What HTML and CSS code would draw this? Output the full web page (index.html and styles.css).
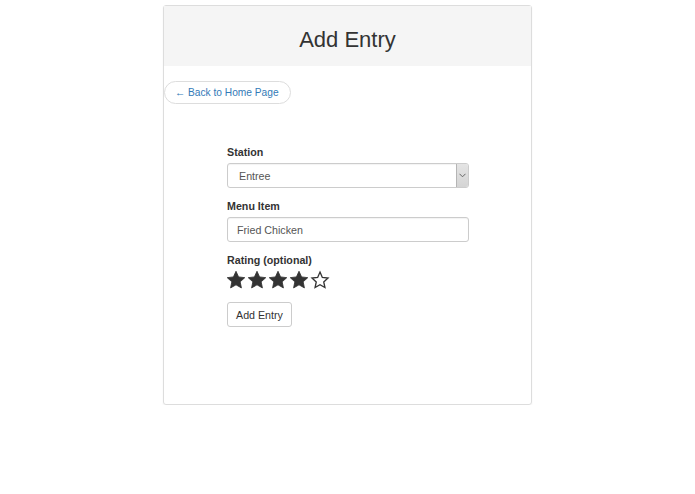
FILE: index.html
```html
<!DOCTYPE html>
<html lang="en">
<head>
  <meta charset="UTF-8">
  <title>Add Entry</title>
  <link rel="stylesheet" href="styles.css">
</head>
<body>
  <div class="panel">
    <div class="panel-heading">
      <h1>Add Entry</h1>
    </div>
    <div class="panel-body">
      <a class="back-link" href="#">&larr; Back to Home Page</a>

      <form class="entry-form">
        <label class="field-label" for="station">Station</label>
        <div class="select-wrap">
          <select id="station" class="form-control">
            <option>Entree</option>
          </select>
          <span class="select-arrow">
            <svg width="7" height="5" viewBox="0 0 7 5"><path d="M0.5 0.8 L3.5 3.8 L6.5 0.8" fill="none" stroke="#666" stroke-width="1"/></svg>
          </span>
        </div>

        <label class="field-label" for="item">Menu Item</label>
        <input type="text" id="item" class="form-control" value="Fried Chicken">

        <label class="field-label">Rating (optional)</label>
        <div class="stars">
          <svg class="star full" viewBox="0 0 24 24"><polygon points="12,1.5 15.1,8.3 22.5,9.2 17,14.2 18.5,21.5 12,17.8 5.5,21.5 7,14.2 1.5,9.2 8.9,8.3"/></svg>
          <svg class="star full" viewBox="0 0 24 24"><polygon points="12,1.5 15.1,8.3 22.5,9.2 17,14.2 18.5,21.5 12,17.8 5.5,21.5 7,14.2 1.5,9.2 8.9,8.3"/></svg>
          <svg class="star full" viewBox="0 0 24 24"><polygon points="12,1.5 15.1,8.3 22.5,9.2 17,14.2 18.5,21.5 12,17.8 5.5,21.5 7,14.2 1.5,9.2 8.9,8.3"/></svg>
          <svg class="star full" viewBox="0 0 24 24"><polygon points="12,1.5 15.1,8.3 22.5,9.2 17,14.2 18.5,21.5 12,17.8 5.5,21.5 7,14.2 1.5,9.2 8.9,8.3"/></svg>
          <svg class="star empty" viewBox="0 0 24 24"><polygon points="12,2.5 14.8,8.9 21.6,9.7 16.5,14.3 17.9,21 12,17.6 6.1,21 7.5,14.3 2.4,9.7 9.2,8.9"/></svg>
        </div>

        <button type="button" class="btn">Add Entry</button>
      </form>
    </div>
  </div>
</body>
</html>
```

FILE: styles.css
```css
body {
  margin: 0;
  font-family: 'Liberation Sans', Arial, sans-serif;
  font-size: 12px;
  color: #333;
  background: #fff;
}
.panel {
  width: 367px;
  height: 398px;
  margin: 5px auto 0 163px;
  border: 1px solid #ddd;
  border-radius: 3px;
  box-shadow: 0 1px 2px rgba(0,0,0,0.06);
  box-sizing: content-box;
}
.panel-heading {
  background: #f5f5f5;
  height: 60px;
  box-sizing: border-box;
  padding-top: 8px;
  display: flex;
  align-items: center;
  justify-content: center;
}
.panel-heading h1 {
  margin: 0;
  font-weight: normal;
  font-size: 22px;
  color: #333;
}
.panel-body {
  padding-top: 15px;
}
.back-link {
  display: inline-block;
  box-sizing: border-box;
  height: 23px;
  line-height: 21px;
  padding: 0 11px 0 10px;
  border: 1px solid #ddd;
  border-radius: 12px;
  color: #337ab7;
  text-decoration: none;
  font-size: 10.2px;
}
.entry-form {
  width: 242px;
  margin: 42px 0 0 63px;
  display: flex;
  flex-direction: column;
  align-items: flex-start;
}
.field-label {
  font-weight: bold;
  font-size: 10.7px;
  color: #333;
  margin-bottom: 5px;
}
.form-control {
  box-sizing: border-box;
  width: 242px;
  height: 25px;
  border: 1px solid #ccc;
  border-radius: 3px;
  padding: 0 9px;
  font-family: inherit;
  font-size: 10.7px;
  color: #555;
  background: #fff;
  margin-bottom: 12px;
  box-shadow: inset 0 1px 1px rgba(0,0,0,0.05);
}
.select-wrap {
  position: relative;
  width: 242px;
}
select.form-control {
  appearance: none;
  -webkit-appearance: none;
  padding-left: 11px;
}
.select-arrow {
  position: absolute;
  top: 1px;
  right: 1px;
  width: 11px;
  height: 23px;
  background: linear-gradient(#e4e4e4, #d4d4d4);
  border-left: 1px solid #b5b5b5;
  border-radius: 0 2px 2px 0;
  display: flex;
  align-items: center;
  justify-content: center;
}
.stars {
  display: flex;
  gap: 1px;
  margin-top: -1px;
  margin-left: -1px;
  margin-bottom: 12px;
}
.star {
  width: 20px;
  height: 20px;
}
.star.full polygon {
  fill: #333;
  stroke: #333;
  stroke-width: 1;
  stroke-linejoin: round;
}
.star.empty polygon {
  fill: none;
  stroke: #333;
  stroke-width: 1.6;
  stroke-linejoin: miter;
}
.btn {
  box-sizing: border-box;
  height: 25px;
  padding: 0 8px;
  background: #fff;
  border: 1px solid #ccc;
  border-radius: 3px;
  font-family: inherit;
  font-size: 10.7px;
  color: #333;
}
```
